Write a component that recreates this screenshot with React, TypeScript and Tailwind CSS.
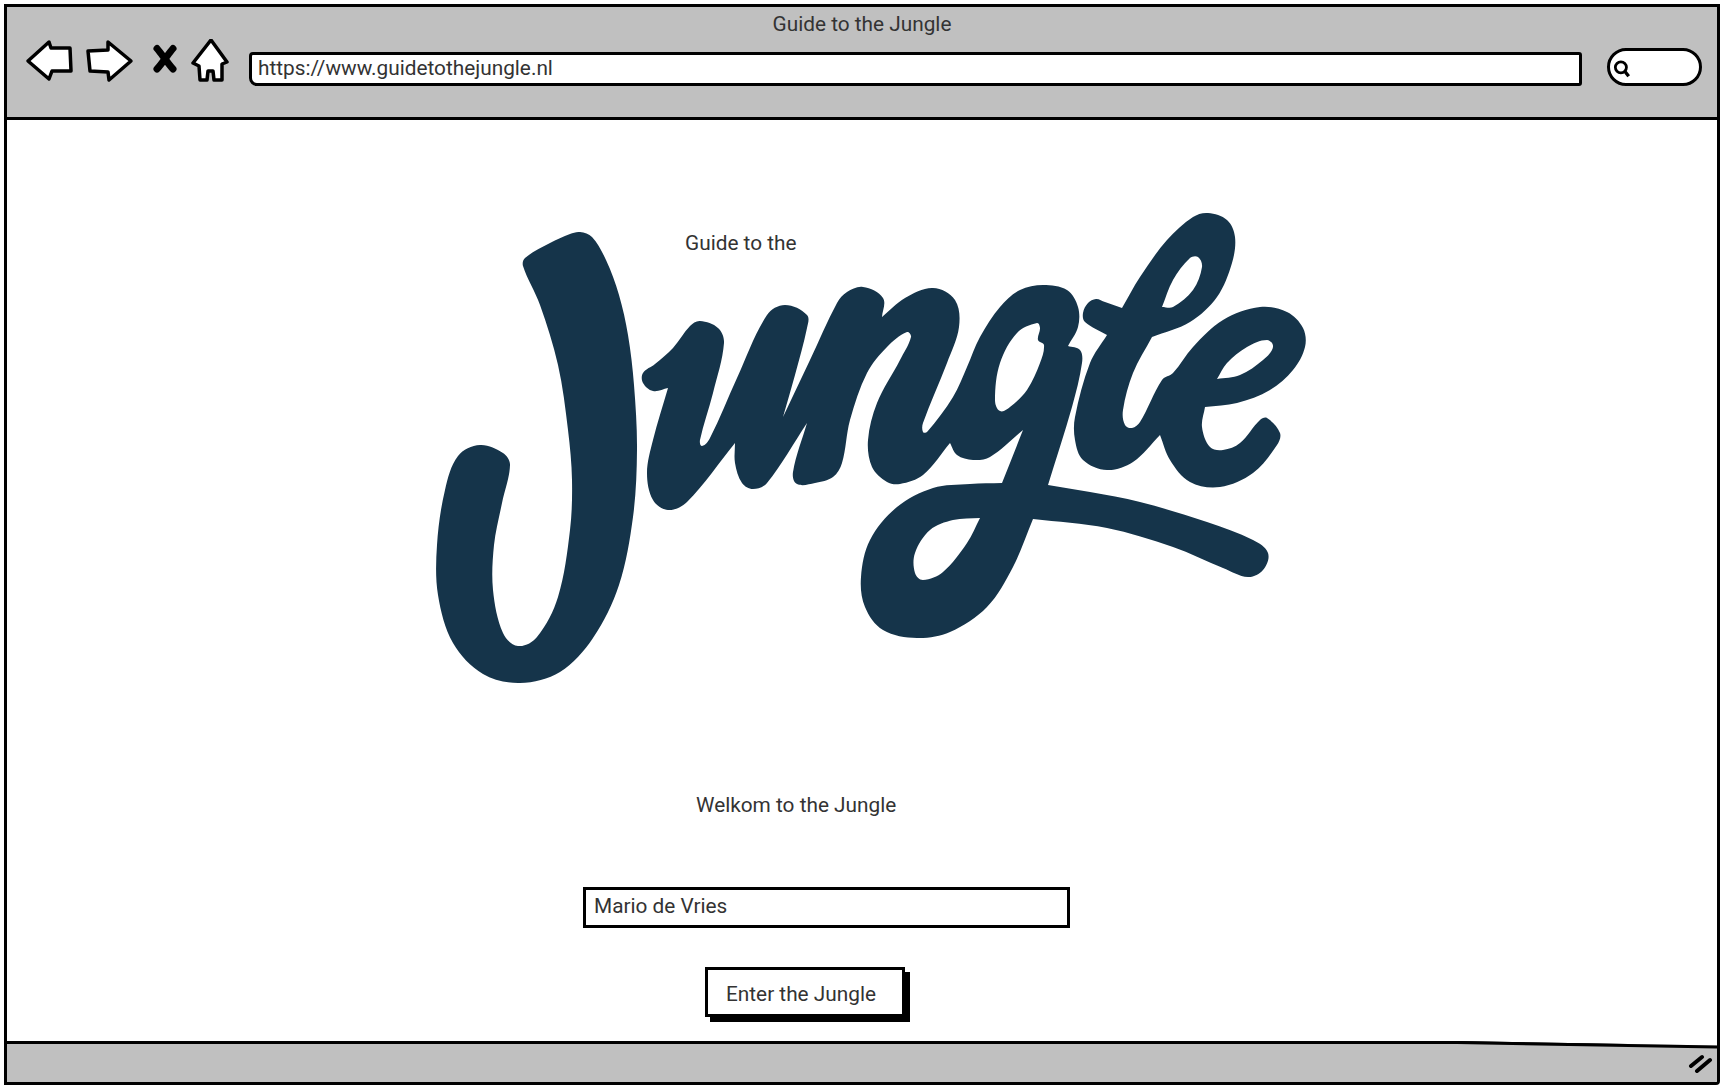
import React from 'react';

type Pt = [number, number];

// smooth curve through the traced points, a repeated point makes a corner
function smooth(raw: Pt[]) {
  const pts: { x: number; y: number; corner: boolean }[] = [];
  raw.forEach((p) => {
    const last = pts[pts.length - 1];
    if (last && last.x === p[0] && last.y === p[1]) last.corner = true;
    else pts.push({ x: p[0], y: p[1], corner: false });
  });
  const n = pts.length;
  const tangent = (i: number, len: number, dir: number) => {
    const p = pts[i];
    const a = pts[(i - 1 + n) % n];
    const b = pts[(i + 1) % n];
    let dx = b.x - a.x;
    let dy = b.y - a.y;
    if (p.corner) {
      const o = dir > 0 ? b : a;
      dx = (o.x - p.x) * dir;
      dy = (o.y - p.y) * dir;
    }
    const l = Math.hypot(dx, dy) || 1;
    return [(dx / l) * len * dir, (dy / l) * len * dir];
  };
  let d = `M${pts[0].x} ${pts[0].y}`;
  for (let i = 0; i < n; i++) {
    const j = (i + 1) % n;
    const len = Math.hypot(pts[j].x - pts[i].x, pts[j].y - pts[i].y) / 3;
    const t1 = tangent(i, len, 1);
    const t2 = tangent(j, len, -1);
    d += `C${(pts[i].x + t1[0]).toFixed(1)} ${(pts[i].y + t1[1]).toFixed(1)} ${(pts[j].x + t2[0]).toFixed(1)} ${(pts[j].y + t2[1]).toFixed(1)} ${pts[j].x} ${pts[j].y}`;
  }
  return d + 'Z';
}

const bigJ: Pt[] = [
  [523, 266], [525, 258], [550, 243], [570, 234], [580, 232], [592, 237], [606, 260], [619, 295], [628, 335], [634, 385],
  [637, 450], [633, 517], [619, 585], [593, 638], [560, 672], [520, 683], [483, 674], [453, 643], [438, 595],
  [437, 545], [445, 490], [458, 456], [480, 445], [503, 453], [510, 465], [502, 503], [494, 545], [493, 590], [503, 633],
  [518, 646], [537, 637], [558, 597], [570, 530], [572, 480], [568, 430], [558, 365], [540, 305],
];

const ung: Pt[] = [
  [643, 373], [655, 364], [673, 348], [690, 326], [700, 321], [718, 328], [724, 343], [713, 393], [700, 440], [702, 446],
  [710, 438], [737, 378], [767, 315], [785, 305], [807, 315], [807, 328], [795, 375], [783, 417], [783, 417], [810, 360],
  [837, 303], [847, 292], [863, 287], [883, 298], [882, 317], [882, 317], [905, 298], [933, 288], [955, 300], [959, 327],
  [947, 363], [923, 423], [923, 432], [927, 432], [953, 397], [967, 367], [980, 337], [1000, 307], [1020, 290], [1043, 285],
  [1067, 290], [1078, 307], [1078, 327], [1068, 346], [1068, 346], [1080, 350], [1082, 363], [1072, 407], [1048, 485], [1048, 485],
  [1090, 492], [1140, 502], [1207, 522], [1253, 540], [1268, 553], [1263, 570], [1248, 577], [1223, 568], [1173, 547], [1107, 528],
  [1033, 519], [1033, 519], [1013, 567], [987, 607], [950, 632], [917, 638], [883, 630], [865, 607], [861, 577], [870, 540],
  [897, 507], [933, 488], [970, 484], [1002, 483], [1002, 483], [1023, 430], [1023, 430], [990, 457], [973, 460],
  [957, 455], [950, 443], [950, 443], [923, 475], [900, 484], [887, 482], [872, 467], [868, 440], [877, 403], [900, 360],
  [911, 337], [907, 332], [887, 347], [867, 373], [850, 420], [842, 463], [833, 477], [815, 483], [797, 484], [793, 472],
  [807, 423], [807, 423], [767, 483], [753, 489], [742, 483], [735, 463], [735, 443], [735, 443], [687, 502], [668, 510],
  [653, 500], [647, 473], [653, 440], [668, 388], [668, 388], [653, 391], [643, 383],
];

const le: Pt[] = [
  [1083, 313], [1088, 303], [1096, 299], [1105, 302], [1122, 308], [1122, 308], [1140, 277], [1167, 240], [1193, 217], [1208, 213],
  [1227, 220], [1235, 237], [1232, 263], [1217, 297], [1190, 322], [1152, 337], [1152, 337], [1133, 373], [1123, 410], [1125, 425],
  [1132, 428], [1140, 422], [1162, 380], [1173, 373], [1193, 347], [1223, 320], [1260, 307], [1287, 312], [1303, 328], [1305, 347],
  [1293, 370], [1270, 390], [1237, 403], [1205, 407], [1205, 407], [1202, 427], [1210, 447], [1223, 450], [1240, 443], [1260, 420],
  [1267, 418], [1280, 433], [1277, 445], [1253, 473], [1220, 487], [1190, 482], [1170, 460], [1160, 435], [1160, 435], [1133, 462],
  [1107, 470], [1083, 460], [1075, 440], [1075, 417], [1090, 363], [1107, 335], [1107, 335], [1085, 322],
];

const holes: Pt[][] = [
  // g counter
  [[1000, 411], [995, 400], [1000, 363], [1017, 333], [1037, 323], [1040, 328], [1038, 340], [1044, 345], [1040, 363], [1027, 390], [1010, 407]],
  // g swash loop
  [[980, 518], [980, 518], [953, 520], [930, 530], [915, 553], [915, 573], [923, 580], [943, 572], [967, 543]],
  // l loop
  [[1198, 257], [1190, 258], [1173, 280], [1162, 307], [1162, 307], [1173, 307], [1193, 290], [1202, 267]],
  // e eye
  [[1267, 340], [1247, 347], [1227, 363], [1217, 379], [1217, 379], [1240, 375], [1263, 360], [1273, 347]],
];

const logoPath = [bigJ, ung, le, ...holes].map(smooth).join('');

function JungleLogo() {
  return (
    <svg viewBox="436 212 870 472" className="w-[870px] h-[472px] block">
      <path d={logoPath} fill="#15344a" fillRule="evenodd" />
    </svg>
  );
}

function NavIcons() {
  return (
    <svg viewBox="0 0 210 44" className="w-[210px] h-[44px] block shrink-0 -mt-[8px]">
      <g fill="#fff" stroke="#000" strokeWidth="3.5" strokeLinejoin="round">
        <path d="M3 22L24 3L26 9H45L46 32H27L24 40Z" />
        <path d="M63 12L83 11L83 3L106 22L84 41L83 33L65 32Z" />
        <path d="M186 1L168 24L174 27L175 41L182 41L183 32L188 32L189 41L197 41L197 25L202 23Z" />
      </g>
      <path d="M132 9.5C136 14 144 26 148 30M148 9.5C144 14 136 26 132 30" fill="none" stroke="#000" strokeWidth="7" strokeLinecap="round" />
    </svg>
  );
}

export default function App() {
  const textClass = "font-['Roboto',sans-serif] text-[20.8px] leading-[28px] text-[#333]";

  return (
    <div className="w-[1726px] h-[1092px] bg-white pt-[4px] pl-[4px] overflow-hidden">
      <div className="w-[1716px] h-[1081px] border-[3px] border-black rounded-br-[4px] flex flex-col">
        <header className="h-[113px] shrink-0 bg-[#c0c0c0] border-b-[3px] border-black flex flex-col">
          <div className={`${textClass} text-center pt-[3px] h-[40px]`}>Guide to the Jungle</div>
          <div className="flex items-start pl-[18px]">
            <NavIcons />
            <div className={`${textClass} ml-[14px] mt-[5px] h-[34px] w-[1333px] bg-white border-[3px] border-black rounded-bl-[8px] rounded-tl-[4px] rounded-r-[3px] pl-[6px] pb-[2px] flex items-center`}>
              https://www.guidetothejungle.nl
            </div>
            <div className="ml-[25px] mt-[1px] h-[38px] w-[95px] bg-white border-[3px] border-black rounded-[24px] pl-[2px] pt-[8px]">
              <svg viewBox="0 0 18 18" className="w-[20px] h-[20px] block">
                <circle cx="8" cy="7.5" r="5" fill="none" stroke="#000" strokeWidth="2.5" />
                <path d="M11.5 11L15 15.5" stroke="#000" strokeWidth="3" />
              </svg>
            </div>
          </div>
        </header>

        <main className="flex-1 relative flex flex-col items-start bg-white">
          <div className="relative ml-[429px] mt-[92px]">
            <JungleLogo />
            <span className={`${textClass} absolute left-[249px] top-[17px]`}>Guide to the</span>
          </div>
          <p className={`${textClass} ml-[689px] mt-[107px]`}>Welkom to the Jungle</p>
          <div className={`${textClass} ml-[576px] mt-[68px] w-[487px] h-[41px] bg-white border-[3px] border-black pl-[8px] pb-[4px] flex items-center`}>
            Mario de Vries
          </div>
          <button className={`${textClass} ml-[698px] mt-[39px] w-[200px] h-[50px] bg-white border-[3px] border-black shadow-[5px_5px_0_0_#000] text-left pl-[18px] pt-[4px]`}>
            Enter the Jungle
          </button>
        </main>

        <footer className="relative h-[41px] shrink-0 bg-[#c0c0c0] border-t-[3px] border-black rounded-br-[2px] flex items-center justify-end pr-[3px]">
          <svg viewBox="0 0 260 9" preserveAspectRatio="none" className="absolute right-0 -top-[3px] w-[260px] h-[9px]">
            <path d="M0 0H260V4.5L0 0Z" fill="#fff" />
            <path d="M0 1.5L260 6" stroke="#000" strokeWidth="3" fill="none" />
          </svg>
          <svg viewBox="0 0 26 20" className="w-[26px] h-[20px] block">
            <path d="M3 13L14 4M9 18L22 7" stroke="#000" strokeWidth="4" strokeLinecap="round" />
          </svg>
        </footer>
      </div>
    </div>
  );
}
